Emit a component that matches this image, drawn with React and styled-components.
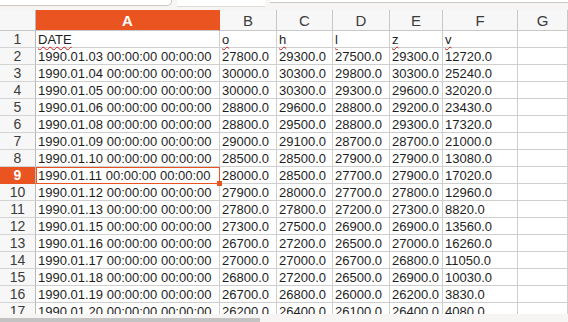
import React from "react";
import styled, { createGlobalStyle } from "styled-components";

const GlobalStyle = createGlobalStyle`
  html, body {
    margin: 0;
    padding: 0;
    background: #ffffff;
    overflow: hidden;
  }
  body {
    font-family: "Liberation Sans", Arial, sans-serif;
  }
`;

const ORANGE = "#e95420";

const COLUMNS = ["A", "B", "C", "D", "E", "F", "G"];

const ROWS = [
  ["1990.01.03", "27800.0", "29300.0", "27500.0", "29300.0", "12720.0"],
  ["1990.01.04", "30000.0", "30300.0", "29800.0", "30300.0", "25240.0"],
  ["1990.01.05", "30000.0", "30300.0", "29300.0", "29600.0", "32020.0"],
  ["1990.01.06", "28800.0", "29600.0", "28800.0", "29200.0", "23430.0"],
  ["1990.01.08", "28800.0", "29500.0", "28800.0", "29300.0", "17320.0"],
  ["1990.01.09", "29000.0", "29100.0", "28700.0", "28700.0", "21000.0"],
  ["1990.01.10", "28500.0", "28500.0", "27900.0", "27900.0", "13080.0"],
  ["1990.01.11", "28000.0", "28500.0", "27700.0", "27900.0", "17020.0"],
  ["1990.01.12", "27900.0", "28000.0", "27700.0", "27800.0", "12960.0"],
  ["1990.01.13", "27800.0", "27800.0", "27200.0", "27300.0", "8820.0"],
  ["1990.01.15", "27300.0", "27500.0", "26900.0", "26900.0", "13560.0"],
  ["1990.01.16", "26700.0", "27200.0", "26500.0", "27000.0", "16260.0"],
  ["1990.01.17", "27000.0", "27000.0", "26700.0", "26800.0", "11050.0"],
  ["1990.01.18", "26800.0", "27200.0", "26500.0", "26900.0", "10030.0"],
  ["1990.01.19", "26700.0", "26800.0", "26000.0", "26200.0", "3830.0"],
  ["1990.01.20", "26200.0", "26400.0", "26100.0", "26400.0", "4080.0"],
];

const HEADINGS = ["DATE", "o", "h", "l", "z", "v"];

const ACTIVE_ROW = 9;

function App() {
  return (
    <Page>
      <GlobalStyle />
      <TopStrip>
        <NameBox />
        <FuncBox />
        <FormulaEdge />
      </TopStrip>
      <Sheet>
        <Corner />
        {COLUMNS.map((c) => (
          <ColHead key={c} $active={c === "A"}>
            {c}
          </ColHead>
        ))}

        <RowHead>1</RowHead>
        {HEADINGS.map((h) => (
          <Cell key={h}>
            <Spell>{h}</Spell>
          </Cell>
        ))}
        <Cell />

        {ROWS.map((row, i) => {
          const n = i + 2;
          const active = n === ACTIVE_ROW;
          return (
            <React.Fragment key={n}>
              <RowHead $active={active}>{n}</RowHead>
              <Cell $selected={active}>
                {row[0]} 00:00:00 00:00:00
                {active && <Handle />}
              </Cell>
              {row.slice(1).map((v, j) => (
                <Cell key={j}>{v}</Cell>
              ))}
              <Cell />
            </React.Fragment>
          );
        })}
      </Sheet>
      <BottomBar>
        <ScrollThumb />
      </BottomBar>
    </Page>
  );
}

const Page = styled.div`
  width: 568px;
  height: 322px;
  display: flex;
  flex-direction: column;
  overflow: hidden;
  background: #ffffff;
`;

const TopStrip = styled.div`
  height: 10px;
  flex: none;
  display: flex;
  align-items: flex-start;
  gap: 5px;
  background: #f6f5f4;
  overflow: hidden;
`;

const NameBox = styled.div`
  width: 172px;
  height: 7px;
  margin-top: -1px;
  background: #ffffff;
  border: 1px solid #cdc7c2;
  border-top: none;
  border-left: none;
  border-bottom-right-radius: 5px;
  box-sizing: border-box;
`;

const FuncBox = styled.div`
  width: 88px;
  height: 7px;
  background: #ffffff;
  border-bottom: 1px solid #dedbd8;
  box-sizing: border-box;
`;

const FormulaEdge = styled.div`
  flex: 1;
  height: 3px;
  background: #ffffff;
  border-bottom: 1px solid #cdc7c2;
  box-sizing: border-box;
`;

const Sheet = styled.div`
  flex: 1;
  display: grid;
  grid-template-columns: 36px 184px 57px 56px 57px 53px 75px 1fr;
  grid-template-rows: 21px;
  grid-auto-rows: 17px;
  overflow: hidden;
  font-family: "Liberation Sans", Arial, sans-serif;
`;

const Corner = styled.div`
  background: #f7f7f7;
  border-right: 1px solid #b9b9b9;
  border-bottom: 1px solid #c8c8c8;
  box-sizing: border-box;
`;

const ColHead = styled.div`
  display: flex;
  align-items: center;
  justify-content: center;
  font-size: 15px;
  font-weight: ${(p) => (p.$active ? 700 : 400)};
  color: ${(p) => (p.$active ? "#ffffff" : "#3c3c3c")};
  background: ${(p) => (p.$active ? ORANGE : "#f7f7f7")};
  border-right: 1px solid ${(p) => (p.$active ? ORANGE : "#c8c8c8")};
  border-bottom: 1px solid #c8c8c8;
  box-sizing: border-box;
`;

const RowHead = styled.div`
  display: flex;
  align-items: center;
  justify-content: center;
  font-size: 14px;
  font-weight: ${(p) => (p.$active ? 700 : 400)};
  color: ${(p) => (p.$active ? "#ffffff" : "#3c3c3c")};
  background: ${(p) => (p.$active ? ORANGE : "#f7f7f7")};
  border-right: 1px solid #b9b9b9;
  border-bottom: 1px solid ${(p) => (p.$active ? ORANGE : "#d4d4d4")};
  box-sizing: border-box;
`;

const Cell = styled.div`
  position: relative;
  display: flex;
  align-items: center;
  padding-left: 2px;
  font-size: 13px;
  color: #1e1e1e;
  white-space: nowrap;
  overflow: visible;
  border-right: 1px solid #cfcfcf;
  border-bottom: 1px solid #cfcfcf;
  box-sizing: border-box;
  ${(p) =>
    p.$selected &&
    `
    outline: 1px solid ${ORANGE};
    outline-offset: -1px;
    z-index: 1;
  `}
`;

const Handle = styled.span`
  position: absolute;
  right: -3px;
  bottom: -3px;
  width: 5px;
  height: 5px;
  background: ${ORANGE};
`;

const Spell = styled.span`
  text-decoration: underline wavy #d0191c;
  text-decoration-thickness: 1px;
  text-underline-offset: 2px;
  text-decoration-skip-ink: none;
`;

const BottomBar = styled.div`
  height: 8px;
  flex: none;
  background: #f6f5f4;
  display: flex;
  align-items: flex-end;
`;

const ScrollThumb = styled.div`
  width: 260px;
  height: 4px;
  background: #c3c3c3;
`;

export default App;
